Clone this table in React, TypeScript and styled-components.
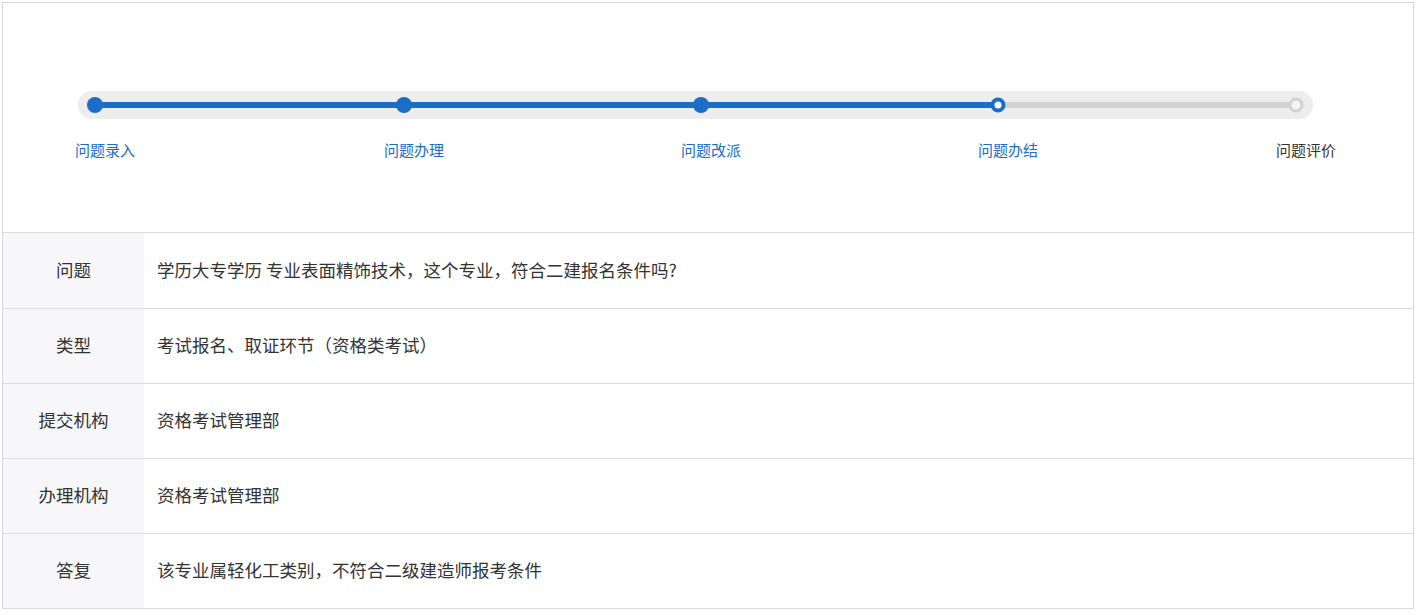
import React from "react";
import styled, { createGlobalStyle } from "styled-components";

const Global = createGlobalStyle`
  html, body { margin: 0; padding: 0; background: #fff; }
  body { font-family: "Microsoft YaHei", "Noto Sans CJK SC", "Liberation Sans", sans-serif; color: #333; }
`;

const Page = styled.div`
  padding: 2px 6px 0 2px;
`;

const Panel = styled.div`
  border: 1px solid #d7d7d7;
  border-bottom: none;
`;

const StepSection = styled.div`
  height: 229px;
  box-sizing: border-box;
  padding: 88px 100px 0 75px;
`;

const Track = styled.div`
  position: relative;
  height: 28px;
  border-radius: 14px;
  background: #ededed;
`;

const Rail = styled.div`
  position: absolute;
  left: 17px;
  right: 17px;
  top: 11px;
  height: 6px;
  background: #d2d2d2;
`;

const Fill = styled.div`
  height: 100%;
  background: #1a6dc8;
`;

const Dot = styled.span<{ $state: "done" | "current" | "todo" }>`
  position: absolute;
  top: 50%;
  box-sizing: border-box;
  border-radius: 50%;
  transform: translate(-50%, -50%);
  ${({ $state }) =>
    $state === "done"
      ? "width: 16px; height: 16px; background: #1a6dc8;"
      : $state === "current"
      ? "width: 15px; height: 15px; background: #fff; border: 4px solid #1a6dc8;"
      : "width: 15px; height: 15px; background: #f4f4f4; border: 3px solid #d2d2d2;"}
`;

const Labels = styled.div`
  position: relative;
  height: 20px;
  margin: 21px 17px 0;
`;

const StepLabel = styled.span<{ $active: boolean }>`
  position: absolute;
  top: 0;
  transform: translateX(-50%);
  margin-left: 10px;
  white-space: nowrap;
  font-size: 15px;
  line-height: 20px;
  color: ${({ $active }) => ($active ? "#1a6dc8" : "#333")};
`;

const Table = styled.div`
  border-top: 1px solid #dcdcdc;
`;

const Row = styled.div`
  display: grid;
  grid-template-columns: 141px 1fr;
  height: 75px;
  border-bottom: 1px solid #dcdcdc;
  box-sizing: border-box;
  &:first-child {
    height: 76px;
  }
`;

const Key = styled.div`
  background: #f7f7f9;
  display: flex;
  align-items: center;
  justify-content: center;
  padding-bottom: 3px;
  font-size: 17.5px;
  color: #333;
`;

const Value = styled.div`
  display: flex;
  align-items: center;
  padding: 0 0 3px 13px;
  font-size: 17.5px;
  color: #333;
`;

const steps = [
  { name: "问题录入", pos: 0 },
  { name: "问题办理", pos: 309 },
  { name: "问题改派", pos: 606 },
  { name: "问题办结", pos: 903 },
  { name: "问题评价", pos: 1201 },
];
const total = 1201;
const current = 3;

const rows: [string, string][] = [
  ["问题", "学历大专学历 专业表面精饰技术，这个专业，符合二建报名条件吗?"],
  ["类型", "考试报名、取证环节（资格类考试）"],
  ["提交机构", "资格考试管理部"],
  ["办理机构", "资格考试管理部"],
  ["答复", "该专业属轻化工类别，不符合二级建造师报考条件"],
];

const pct = (p: number) => `${(p / total) * 100}%`;

export default function App() {
  return (
    <Page>
      <Global />
      <Panel>
        <StepSection>
          <Track>
            <Rail>
              <Fill style={{ width: pct(steps[current].pos) }} />
              {steps.map((s, i) => (
                <Dot
                  key={s.name}
                  $state={i < current ? "done" : i === current ? "current" : "todo"}
                  style={{ left: pct(s.pos) }}
                />
              ))}
            </Rail>
          </Track>
          <Labels>
            {steps.map((s, i) => (
              <StepLabel key={s.name} $active={i <= current} style={{ left: pct(s.pos) }}>
                {s.name}
              </StepLabel>
            ))}
          </Labels>
        </StepSection>
        <Table>
          {rows.map(([k, v]) => (
            <Row key={k}>
              <Key>{k}</Key>
              <Value>{v}</Value>
            </Row>
          ))}
        </Table>
      </Panel>
    </Page>
  );
}
